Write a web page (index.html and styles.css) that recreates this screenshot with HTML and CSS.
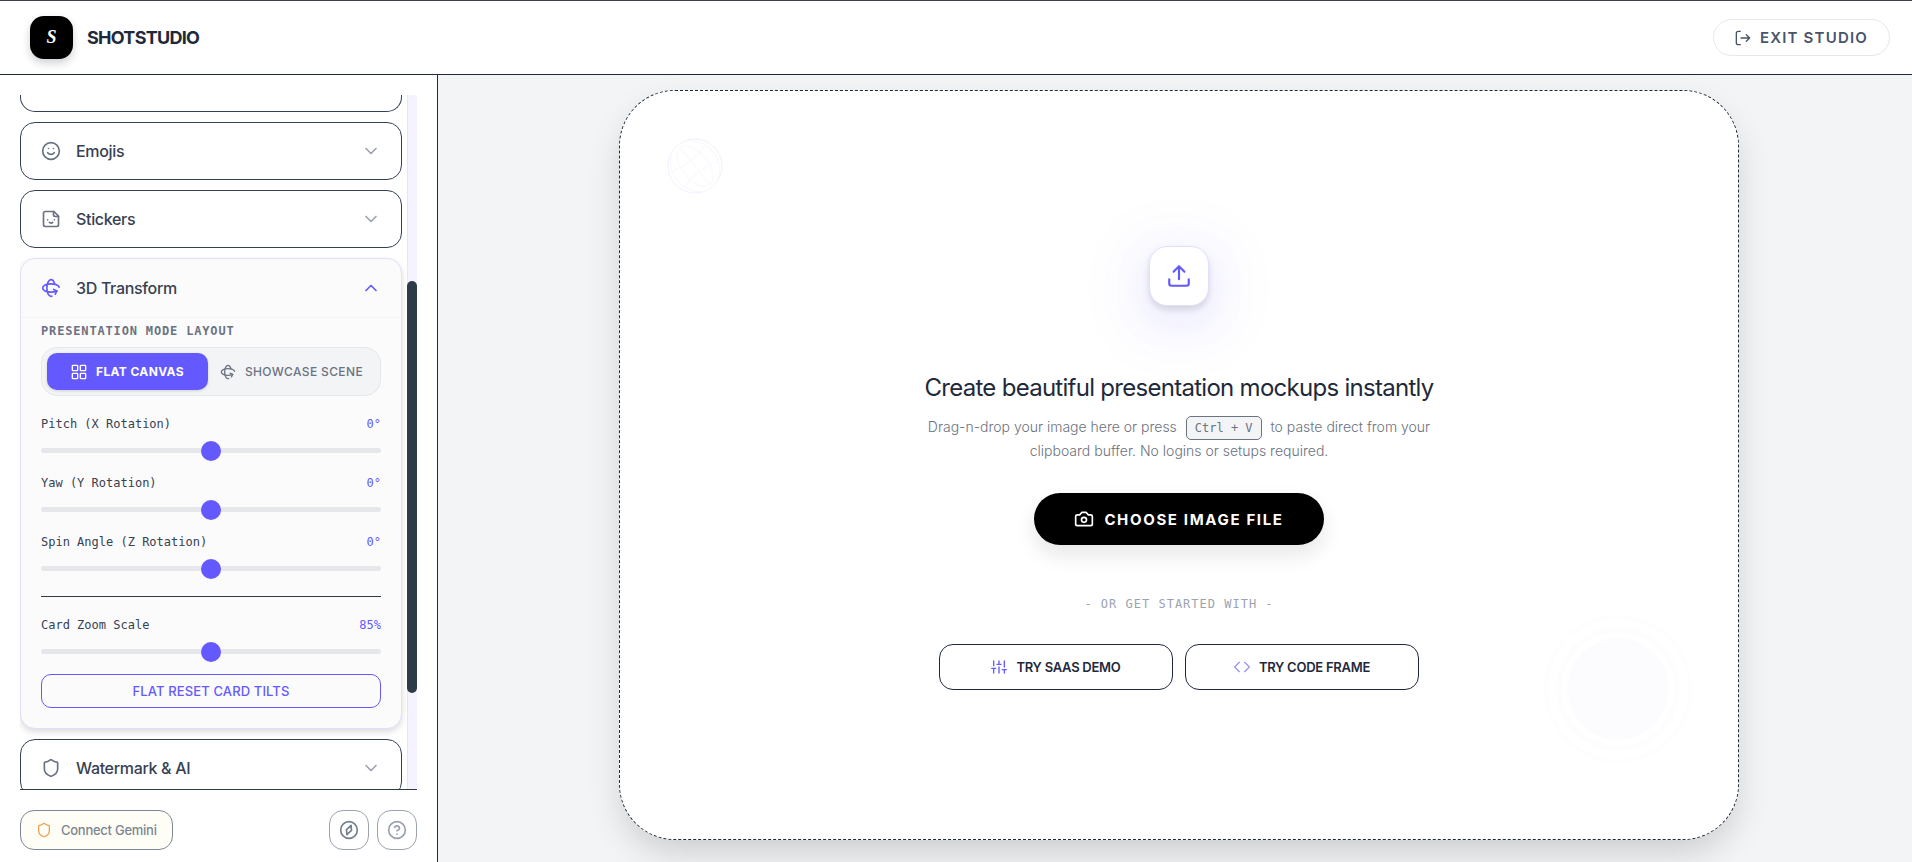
FILE: index.html
```
<!DOCTYPE html>
<html lang="en">
<head>
	<meta charset="utf-8">
	<title>ShotStudio</title>
	<link rel="stylesheet" href="styles.css">
</head>
<body>
	<!-- Shared icons -->
	<svg class="sprite" aria-hidden="true">
		<symbol id="icon-chevron" viewBox="0 0 24 24"><path d="m6 9 6 6 6-6"/></symbol>
		<symbol id="icon-rotate" viewBox="0 0 24 24">
			<path d="M16.466 7.5C15.643 4.237 13.952 2 12 2 9.239 2 7 6.477 7 12s2.239 10 5 10c.342 0 .677-.069 1-.2"/>
			<path d="m15.194 13.707 3.814 1.86-1.86 3.814"/>
			<path d="M19 15.57c-1.804.885-4.274 1.43-7 1.43-5.523 0-10-2.239-10-5s4.477-5 10-5c4.838 0 8.873 1.718 9.8 4"/>
		</symbol>
		<symbol id="icon-shield" viewBox="0 0 24 24">
			<path d="M20 13c0 5-3.5 7.5-7.66 8.95a1 1 0 0 1-.67-.01C7.5 20.5 4 18 4 13V6a1 1 0 0 1 1-1c2 0 4.5-1.2 6.24-2.72a1.17 1.17 0 0 1 1.52 0C14.51 3.81 17 5 19 5a1 1 0 0 1 1 1z"/>
		</symbol>
	</svg>

	<header class="topbar">
		<a class="brand" href="#">
			<span class="brand-mark">S</span>
			<span class="brand-name">SHOTSTUDIO</span>
		</a>
		<button class="exit-btn" type="button">
			<svg class="icon icon-sm" viewBox="0 0 24 24"><path d="M8 22H5a3 3 0 0 1-3-3V5a3 3 0 0 1 3-3h3M17 17l5-5-5-5M22 12H9"/></svg>
			EXIT STUDIO
		</button>
	</header>

	<div class="workspace">
		<!-- Sidebar -->
		<aside class="sidebar">
			<div class="tools">
				<div class="tool-list">
					<div class="panel panel-cut"></div>

					<section class="panel">
						<button class="panel-head" type="button">
							<svg class="icon" viewBox="0 0 24 24"><circle cx="12" cy="12" r="10"/><path d="M8 14s1.5 2 4 2 4-2 4-2M9 9h.01M15 9h.01"/></svg>
							<span>Emojis</span>
							<svg class="icon chevron"><use href="#icon-chevron"/></svg>
						</button>
					</section>

					<section class="panel">
						<button class="panel-head" type="button">
							<svg class="icon" viewBox="0 0 24 24"><path d="M15.5 3H5a2 2 0 0 0-2 2v14a2 2 0 0 0 2 2h14a2 2 0 0 0 2-2V8.5Z"/><path d="M15 3v4a2 2 0 0 0 2 2h4M8 13h.01M16 13h.01M10 16s.8 1 2 1c1.3 0 2-1 2-1"/></svg>
							<span>Stickers</span>
							<svg class="icon chevron"><use href="#icon-chevron"/></svg>
						</button>
					</section>

					<section class="panel panel-open">
						<button class="panel-head" type="button" aria-expanded="true">
							<svg class="icon"><use href="#icon-rotate"/></svg>
							<span>3D Transform</span>
							<svg class="icon chevron"><use href="#icon-chevron"/></svg>
						</button>
						<div class="panel-body">
							<h3 class="group-title">PRESENTATION MODE LAYOUT</h3>
							<div class="segmented">
								<button class="segment active" type="button">
									<svg class="icon icon-sm" viewBox="0 0 24 24"><rect x="2" y="2" width="8" height="8" rx="1"/><rect x="14" y="2" width="8" height="8" rx="1"/><rect x="2" y="14" width="8" height="8" rx="1"/><rect x="14" y="14" width="8" height="8" rx="1"/></svg>
									FLAT CANVAS
								</button>
								<button class="segment" type="button">
									<svg class="icon icon-sm"><use href="#icon-rotate"/></svg>
									SHOWCASE SCENE
								</button>
							</div>

							<div class="control">
								<div class="control-row"><label for="pitch">Pitch (X Rotation)</label><output for="pitch">0°</output></div>
								<input type="range" id="pitch" min="-45" max="45" value="0">
							</div>
							<div class="control">
								<div class="control-row"><label for="yaw">Yaw (Y Rotation)</label><output for="yaw">0°</output></div>
								<input type="range" id="yaw" min="-45" max="45" value="0">
							</div>
							<div class="control">
								<div class="control-row"><label for="spin">Spin Angle (Z Rotation)</label><output for="spin">0°</output></div>
								<input type="range" id="spin" min="-180" max="180" value="0">
							</div>
							<hr class="divider">
							<div class="control">
								<div class="control-row"><label for="zoom">Card Zoom Scale</label><output for="zoom">85%</output></div>
								<input type="range" id="zoom" min="50" max="120" value="85">
							</div>
							<button class="reset-btn" type="button">FLAT RESET CARD TILTS</button>
						</div>
					</section>

					<section class="panel">
						<button class="panel-head" type="button">
							<svg class="icon"><use href="#icon-shield"/></svg>
							<span>Watermark &amp; AI</span>
							<svg class="icon chevron"><use href="#icon-chevron"/></svg>
						</button>
					</section>
				</div>
				<div class="scroll-track"><div class="scroll-thumb"></div></div>
			</div>

			<footer class="sidebar-footer">
				<button class="gemini-btn" type="button">
					<svg class="icon icon-sm"><use href="#icon-shield"/></svg>
					Connect Gemini
				</button>
				<button class="round-btn round-btn-dark" type="button" aria-label="Explore">
					<svg class="icon" viewBox="0 0 24 24"><circle cx="12" cy="12" r="10"/><path d="m14.5 6.5.5 6-5.5 5-.5-6Z"/></svg>
				</button>
				<button class="round-btn" type="button" aria-label="Help">
					<svg class="icon" viewBox="0 0 24 24"><circle cx="12" cy="12" r="10"/><path d="M9.09 9a3 3 0 0 1 5.83 1c0 2-3 3-3 3M12 17h.01"/></svg>
				</button>
			</footer>
		</aside>

		<!-- Canvas -->
		<main class="canvas">
			<div class="dropzone">
				<svg class="globe" viewBox="0 0 56 56" aria-hidden="true">
					<circle cx="28" cy="28" r="27"/>
					<g transform="rotate(-38 28 28)">
						<ellipse cx="28" cy="28" rx="13" ry="24"/>
						<ellipse cx="28" cy="28" rx="23" ry="27"/>
						<path d="M28 4v48M7 18q21 6 42 0M7 38q21-6 42 0"/>
					</g>
				</svg>
				<div class="ripple" aria-hidden="true"></div>

				<div class="upload-tile">
					<svg class="icon" viewBox="0 0 24 24"><path d="M21 15v4a2 2 0 0 1-2 2H5a2 2 0 0 1-2-2v-4M17 8l-5-5-5 5M12 3v12"/></svg>
				</div>
				<h1>Create beautiful presentation mockups instantly</h1>
				<p class="hint">Drag-n-drop your image here or press <kbd>Ctrl + V</kbd> to paste direct from your clipboard buffer. No logins or setups required.</p>
				<button class="choose-btn" type="button">
					<svg class="icon" viewBox="0 0 24 24"><path d="M14.5 4h-5L7 7H4a2 2 0 0 0-2 2v9a2 2 0 0 0 2 2h16a2 2 0 0 0 2-2V9a2 2 0 0 0-2-2h-3z"/><circle cx="12" cy="13" r="3"/></svg>
					CHOOSE IMAGE FILE
				</button>
				<p class="or">- OR GET STARTED WITH -</p>
				<div class="demos">
					<button class="demo-btn" type="button">
						<svg class="icon icon-sm" viewBox="0 0 24 24"><path d="M4 21v-7M4 10V3M12 21v-9M12 8V3M20 21v-5M20 12V3M1 14h6M9 8h6M17 16h6"/></svg>
						TRY SAAS DEMO
					</button>
					<button class="demo-btn demo-btn-code" type="button">
						<svg class="icon icon-sm" viewBox="0 0 24 24"><path d="m16 19 7-7-7-7M8 5l-7 7 7 7"/></svg>
						TRY CODE FRAME
					</button>
				</div>
			</div>
		</main>
	</div>
</body>
</html>
```
FILE: styles.css
```
* {
	box-sizing: border-box;
}

body {
	margin: 0;
	height: 100vh;
	display: flex;
	flex-direction: column;
	overflow: hidden;
	font-family: Inter, "Liberation Sans", sans-serif;
	color: #1e293b;
	background: #fff;
}

button {
	font: inherit;
	color: inherit;
	background: none;
	border: none;
	padding: 0;
	display: flex;
	align-items: center;
	justify-content: center;
	cursor: pointer;
}

.sprite {
	position: absolute;
	width: 0;
	height: 0;
}

.icon {
	width: 20px;
	height: 20px;
	flex: none;
	fill: none;
	stroke: currentColor;
	stroke-width: 2;
	stroke-linecap: round;
	stroke-linejoin: round;
}

.icon-sm {
	width: 16px;
	height: 16px;
}

/* Header */
.topbar {
	display: flex;
	align-items: center;
	justify-content: space-between;
	height: 75px;
	flex: none;
	padding: 0 22px 0 30px;
	border-top: 1px solid #3f3f46;
	border-bottom: 1px solid #1e293b;
}

.brand {
	display: flex;
	align-items: center;
	gap: 14px;
	color: inherit;
	text-decoration: none;
}

.brand-mark {
	width: 43px;
	height: 43px;
	display: flex;
	align-items: center;
	justify-content: center;
	border-radius: 14px;
	background: #000;
	color: #fff;
	font: italic bold 18px "Liberation Serif", serif;
	box-shadow: 0 4px 8px rgba(15, 23, 42, 0.2);
}

.brand-name {
	font-size: 18px;
	font-weight: 700;
	letter-spacing: -0.04em;
}

.exit-btn {
	height: 37px;
	gap: 9px;
	padding: 0 21px;
	border: 1px solid #e5e7eb;
	border-radius: 20px;
	font-size: 15px;
	font-weight: 600;
	letter-spacing: 0.08em;
	color: #475569;
}

.workspace {
	flex: 1;
	display: flex;
	min-height: 0;
}

/* Sidebar */
.sidebar {
	width: 438px;
	flex: none;
	display: flex;
	flex-direction: column;
	padding: 20px 20px 12px;
	border-right: 1px solid #1e293b;
}

.tools {
	flex: 1;
	min-height: 0;
	display: flex;
	gap: 5px;
	overflow: hidden;
}

.tool-list {
	flex: 1;
	display: flex;
	flex-direction: column;
	gap: 10px;
}

.scroll-track {
	width: 10px;
	background: #f5f3ff;
	border-left: 1px solid #e5e7eb;
	padding-top: 186px;
}

.scroll-thumb {
	width: 10px;
	height: 412px;
	margin-left: -1px;
	border-radius: 5px;
	background: #2d3a48;
}

.panel {
	flex: none;
	border: 1px solid #334155;
	border-radius: 15px;
	background: #fff;
}

.panel-cut {
	height: 17px;
	border-top: none;
	border-radius: 0 0 15px 15px;
}

.panel-head {
	width: 100%;
	height: 56px;
	gap: 15px;
	padding: 0 20px;
	font-size: 16px;
	font-weight: 500;
	letter-spacing: -0.02em;
	color: #374151;
}

.panel-head .icon {
	color: #6b7280;
}

.panel-head .chevron {
	margin-left: auto;
	color: #9ca3af;
}

.panel-open {
	border-color: #e0e0fc;
	background: #fbfbfc;
	box-shadow: 0 3px 6px rgba(0, 0, 0, 0.14);
}

.panel-open .panel-head {
	height: 59px;
	border-bottom: 1px solid #f3f4f6;
}

.panel-open .panel-head .icon {
	color: #6359ff;
}

.panel-open .chevron {
	transform: rotate(180deg);
}

.panel-body {
	display: flex;
	flex-direction: column;
	padding: 5px 20px 20px;
}

.group-title {
	margin: 0 0 8px;
	font: bold 12px/16px "DejaVu Sans Mono", monospace;
	letter-spacing: 0.07em;
	color: #6b7280;
}

.segmented {
	display: flex;
	padding: 5px;
	margin-bottom: 18px;
	border: 1px solid #e5e7eb;
	border-radius: 16px;
	background: #f3f4f6;
}

.segment {
	flex: 1;
	height: 37px;
	gap: 9px;
	padding: 0 12px;
	border-radius: 10px;
	font-size: 12px;
	font-weight: 500;
	letter-spacing: 0.03em;
	white-space: nowrap;
	color: #6b7280;
}

.segment.active {
	background: #6359ff;
	color: #fff;
	font-weight: 700;
	box-shadow: 0 1px 3px rgba(0, 0, 0, 0.15);
}

.control {
	margin-bottom: 13px;
}

.control-row {
	display: flex;
	justify-content: space-between;
	margin-bottom: 6px;
	font: 12px/20px "DejaVu Sans Mono", monospace;
	color: #374151;
}

.control-row output {
	color: #6359ff;
}

input[type="range"] {
	display: block;
	appearance: none;
	-webkit-appearance: none;
	width: 100%;
	height: 20px;
	margin: 0;
	background: none;
}

input[type="range"]::-webkit-slider-runnable-track {
	height: 5px;
	border-radius: 3px;
	background: #e5e7eb;
}

input[type="range"]::-webkit-slider-thumb {
	-webkit-appearance: none;
	width: 20px;
	height: 20px;
	margin-top: -7px;
	border-radius: 50%;
	background: #6359ff;
}

.divider {
	width: 100%;
	margin: 5px 0 18px;
	border: none;
	border-top: 1px solid #2d3a48;
}

.reset-btn {
	height: 34px;
	border: 1px solid #6359ff;
	border-radius: 10px;
	font-size: 13px;
	font-weight: 500;
	letter-spacing: 0.01em;
	color: #6359ff;
}

.sidebar-footer {
	display: flex;
	gap: 8px;
	padding-top: 20px;
	border-top: 1px solid #2d3a48;
}

.gemini-btn {
	height: 40px;
	gap: 9px;
	margin-right: auto;
	padding: 0 15px;
	border: 1px solid #7c8797;
	border-radius: 14px;
	background: #fffef6;
	font-size: 13px;
	font-weight: 500;
	letter-spacing: -0.02em;
	color: #7c8593;
}

.gemini-btn .icon {
	color: #eba45c;
}

.round-btn {
	width: 40px;
	height: 40px;
	border: 1px solid #9ca3af;
	border-radius: 14px;
	color: #9aa1ac;
}

.round-btn-dark {
	color: #757f8d;
}

/* Canvas */
.canvas {
	flex: 1;
	display: flex;
	justify-content: center;
	padding: 15px 0 22px 8px;
	background: #f3f4f6;
}

.dropzone {
	position: relative;
	width: 100%;
	max-width: 1120px;
	display: flex;
	flex-direction: column;
	align-items: center;
	padding-top: 155px;
	border: 1px dashed #1e293b;
	border-radius: 56px;
	background: #fff;
	box-shadow: 0 16px 36px -6px rgba(0, 0, 0, 0.18);
}

.globe {
	position: absolute;
	top: 47px;
	left: 47px;
	width: 56px;
	height: 56px;
	fill: none;
	stroke: #f1f0fe;
}

.globe g {
	stroke: #f8f8ff;
}

.ripple {
	position: absolute;
	right: 45px;
	bottom: 75px;
	width: 150px;
	height: 150px;
	border-radius: 50%;
	background: radial-gradient(circle closest-side, #fcfcff 0 66%, #fff 69% 74%, #fdfdff 77% 81%, #fff 84% 93%, #fdfdff 96%, #fff 100%);
}

.upload-tile {
	width: 60px;
	height: 60px;
	display: flex;
	align-items: center;
	justify-content: center;
	border: 1px solid #e0e0fc;
	border-radius: 18px;
	background: #fff;
	color: #6359ff;
	box-shadow: 0 4px 6px rgba(0, 0, 0, 0.12), 0 14px 36px 10px rgba(99, 89, 255, 0.08), 0 12px 50px 40px rgba(99, 89, 255, 0.02);
}

.upload-tile .icon {
	width: 26px;
	height: 26px;
}

.dropzone h1 {
	margin: 65px 0 10px;
	font-size: 24px;
	font-weight: 400;
	line-height: 34px;
	letter-spacing: -0.03em;
	text-align: center;
}

.hint {
	max-width: 512px;
	margin: 0 0 30px;
	font-size: 14px;
	font-weight: 300;
	line-height: 24px;
	text-align: center;
	color: #6b7280;
}

.hint kbd {
	display: inline-block;
	margin: -2px 5px;
	padding: 3px 8px;
	border: 1px solid #6b7280;
	border-radius: 5px;
	background: #f3f4f6;
	font: 12px/16px "DejaVu Sans Mono", monospace;
	vertical-align: middle;
}

.choose-btn {
	height: 52px;
	gap: 10px;
	padding: 0 40px;
	border-radius: 26px;
	background: #000;
	color: #fff;
	font-size: 15px;
	font-weight: 700;
	letter-spacing: 0.11em;
	box-shadow: 0 10px 20px rgba(15, 23, 42, 0.1);
}

.or {
	margin: 51px 0 32px;
	font: 12px/16px "DejaVu Sans Mono", monospace;
	letter-spacing: 1px;
	color: #9ca3af;
}

.demos {
	display: grid;
	grid-template-columns: 1fr 1fr;
	gap: 12px;
	width: 480px;
}

.demo-btn {
	height: 46px;
	gap: 9px;
	border: 1px solid #1e293b;
	border-radius: 14px;
	font-size: 13px;
	font-weight: 600;
	letter-spacing: -0.02em;
}

.demo-btn .icon {
	color: #6359ff;
}

.demo-btn-code .icon {
	color: #9b96fa;
}
```
